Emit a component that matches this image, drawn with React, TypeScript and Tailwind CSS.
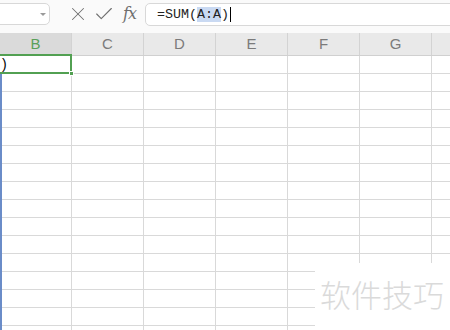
import { X, Check } from "lucide-react";

const cols = ["B", "C", "D", "E", "F", "G", "H"];
const rows = Array.from({ length: 16 }, (_, i) => i);

export default function App() {
  return (
    <div className="relative w-[450px] h-[330px] overflow-hidden bg-white font-['Liberation_Sans',sans-serif]">
      {/* formula bar */}
      <div className="flex items-start h-[33px] pt-[3px] bg-[#fafafa]">
        <div className="relative -ml-[12px] w-[62px] h-[22px] shrink-0 rounded-[5px] border border-[#d8d8d8] bg-white">
          <div className="absolute right-[3px] top-[9px] w-0 h-0 border-l-[3px] border-r-[3px] border-t-[3px] border-l-transparent border-r-transparent border-t-[#9a9a9a]" />
        </div>
        <div className="flex items-center h-[22px] ml-[17px] text-[#6f6f6f]">
          <X size={22} strokeWidth={1.1} />
          <Check size={22} strokeWidth={1.2} className="ml-[4px]" />
          <span className="ml-[8px] text-[16px] italic font-['DejaVu_Serif',serif] tracking-[-1px]">fx</span>
        </div>
        <div className="flex items-center ml-[9px] -mr-[20px] flex-1 h-[23px] rounded-[5px] border border-[#d8d8d8] bg-white pl-[11px] font-['Liberation_Mono',monospace] text-[13.33px] text-[#222]">
          <span>=SUM(</span>
          <span className="bg-[#c9d9f2] leading-[15px]">A:A</span>
          <span>)</span>
          <span className="ml-[1px] w-px h-[15px] bg-black" />
        </div>
      </div>

      {/* column headers */}
      <div className="flex h-[23px] bg-[#e9e9e9] border-b border-[#d0d0d0] text-[15px] text-[#7b7b7b]">
        {cols.map((c) => (
          <div
            key={c}
            className={`w-[72px] shrink-0 flex items-center justify-center border-r border-[#d3d3d3] ${
              c === "B" ? "bg-[#dadada] text-[#5aa05a]" : ""
            }`}
          >
            {c === "H" ? "" : c}
          </div>
        ))}
      </div>

      {/* cells */}
      {rows.map((r) => (
        <div key={r} className="flex h-[18px] border-b border-[#d9d9d9]">
          {cols.map((c) => (
            <div key={c} className="w-[72px] shrink-0 border-r border-[#d9d9d9] pl-[2px] text-[14px] leading-[17px] text-black">
              {r === 0 && c === "B" ? ")" : null}
            </div>
          ))}
        </div>
      ))}

      {/* selection */}
      <div className="absolute left-[-2px] top-[54px] w-[74px] h-[20px] border-2 border-[#52a052]" />
      <div className="absolute left-[69px] top-[71px] w-[5px] h-[5px] bg-[#52a052] border border-white" />
      <div className="absolute left-0 top-[74px] bottom-0 w-[2px] bg-[#6a8cc8]" />

      {/* watermark */}
      <div className="absolute left-[315px] top-[263px] right-0 bottom-0 bg-white flex items-start pl-[5px] pt-[13px]">
        <span className="text-[31px] leading-[36px] font-light text-[#dadada] font-['Noto_Sans_CJK_SC',sans-serif]">软件技巧</span>
      </div>
    </div>
  );
}
